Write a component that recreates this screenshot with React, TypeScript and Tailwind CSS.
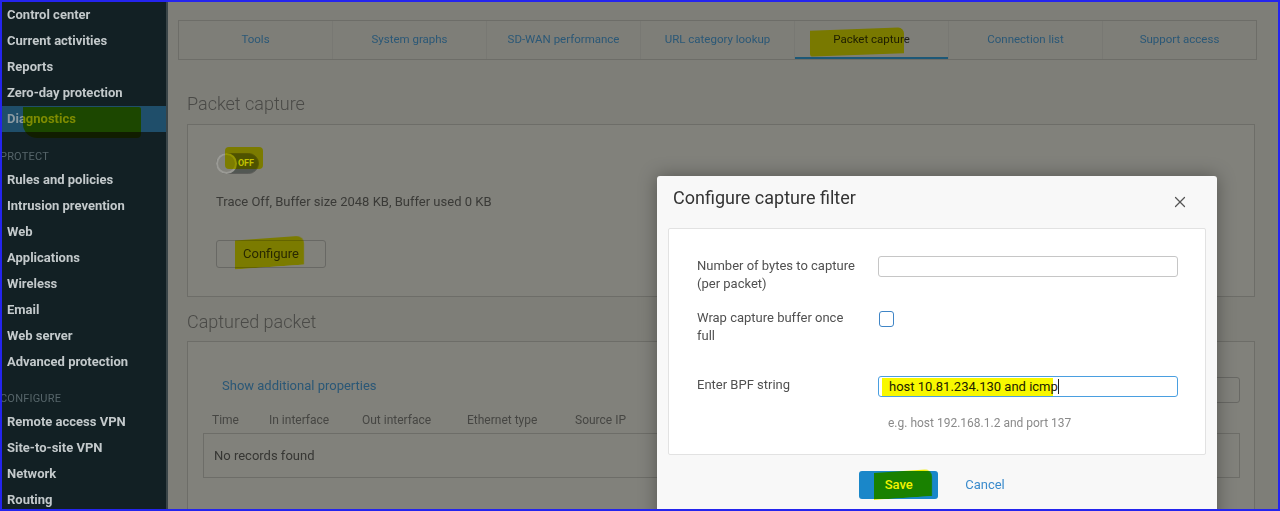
import React from "react";
import { X } from "lucide-react";

const font = { fontFamily: 'Roboto, "Liberation Sans", Arial, sans-serif' };

type NavItem = { label: string; header?: boolean; active?: boolean; h?: string };

const nav: NavItem[] = [
  { label: "Control center" },
  { label: "Current activities" },
  { label: "Reports" },
  { label: "Zero-day protection" },
  { label: "Diagnostics", active: true },
  { label: "PROTECT", header: true, h: "h-[35px]" },
  { label: "Rules and policies" },
  { label: "Intrusion prevention" },
  { label: "Web" },
  { label: "Applications" },
  { label: "Wireless" },
  { label: "Email" },
  { label: "Web server" },
  { label: "Advanced protection" },
  { label: "CONFIGURE", header: true, h: "h-[34px]" },
  { label: "Remote access VPN" },
  { label: "Site-to-site VPN" },
  { label: "Network" },
  { label: "Routing" },
];

const tabs = [
  "Tools",
  "System graphs",
  "SD-WAN performance",
  "URL category lookup",
  "Packet capture",
  "Connection list",
  "Support access",
];

function Sidebar() {
  return (
    <div className="w-[166px] shrink-0 bg-[#122024] border-r-2 border-[#3a4548] flex flex-col overflow-hidden">
      {nav.map((n) =>
        n.header ? (
          <div
            key={n.label}
            className={
              n.h +
              " shrink-0 flex items-end pb-[3px] -ml-[2px] text-[11px] leading-[14px] text-[#56656a] tracking-[0.2px]"
            }
          >
            {n.label}
          </div>
        ) : (
          <div
            key={n.label}
            className={
              "relative h-[26px] shrink-0 flex items-center pl-[5px] text-[13px] font-bold " +
              (n.active ? "bg-[#1f4e6a] text-[#8c9ba3]" : "text-[#c3c9cb]")
            }
          >
            {n.label}
            {n.active && (
              <span className="absolute left-[21px] top-[1px] w-[118px] h-[31px] bg-[#e6e600] mix-blend-multiply rounded-bl-[14px] rounded-br-[4px] rounded-tr-[2px]" />
            )}
          </div>
        )
      )}
    </div>
  );
}

function Tabs() {
  return (
    <div className="h-[40px] border border-[#6d6d68] flex">
      {tabs.map((t, i) => (
        <div
          key={t}
          className={
            "relative flex-1 flex items-center justify-center text-[11.5px] " +
            (i > 0 ? "border-l border-[#787873] " : "") +
            (t === "Packet capture" ? "text-[#1e1e14]" : "text-[#2b5877]")
          }
        >
          {t}
          {t === "Packet capture" && (
            <>
              <span className="absolute left-[15px] top-[8px] w-[94px] h-[26px] bg-[#f4f400] mix-blend-multiply rounded-tr-[6px] rounded-bl-[3px] skew-y-[-2deg]" />
              <span className="absolute left-0 right-0 bottom-0 h-[2px] bg-[#1d5877]" />
            </>
          )}
        </div>
      ))}
    </div>
  );
}

function Toggle() {
  return (
    <div className="relative w-[43px] h-[21px]">
      <div className="absolute inset-0 rounded-full bg-[#525753] border border-[#5d5d5a]" />
      <div className="absolute left-0 top-0 w-[21px] h-[21px] rounded-full bg-[#83837d] border-2 border-[#9a9a95]" />
      <span className="absolute right-[5px] top-[4px] text-[9px] font-bold leading-[12px] text-[#c9c9c0]">
        OFF
      </span>
      <span className="absolute left-[9px] -top-[6px] w-[38px] h-[22px] bg-[#f4f400] mix-blend-multiply rounded-sm" />
    </div>
  );
}

function Main() {
  return (
    <div className="relative flex-1 bg-[#7e7e78] pt-[18px] pl-[10px] pr-[21px] overflow-hidden">
      <Tabs />
      <div className="ml-[9px] mr-[2px]">
        <div className="mt-[32px] h-[24px] text-[18px] font-light leading-[24px] text-[#4a4a47]">
          Packet capture
        </div>
        <div className="mt-[8px] border border-[#6d6d68] bg-[#81817b] pl-[28px] pt-[28px] pb-[28px]">
          <Toggle />
          <div className="mt-[19px] text-[13px] leading-[18px] text-[#3a3a37]">
            Trace Off, Buffer size 2048 KB, Buffer used 0 KB
          </div>
          <div className="mt-[29px] relative w-[110px] h-[28px] border border-[#686864] rounded-[3px] flex items-center justify-center text-[13px] text-[#2a2a20]">
            Configure
            <span className="absolute left-[18px] top-[-3px] w-[69px] h-[29px] bg-[#f4f400] mix-blend-multiply rounded-tr-[8px] skew-y-[-4deg]" />
          </div>
        </div>

        <div className="mt-[13px] h-[24px] text-[18px] font-light leading-[24px] text-[#4a4a47]">
          Captured packet
        </div>
        <div className="mt-[7px] border border-[#6d6d68] bg-[#81817b] pt-[35px] pl-[15px] pr-[14px] h-[200px]">
          <div className="flex justify-between items-start">
            <div className="pl-[19px] text-[13px] leading-[18px] text-[#2a5776]">
              Show additional properties
            </div>
            <div className="w-[240px] h-[26px] border border-[#686864] rounded-[3px]" />
          </div>
          <div className="mt-[9px] flex h-[16px] items-center pl-[9px] text-[12px] text-[#464643]">
            <span className="w-[57px]">Time</span>
            <span className="w-[93px]">In interface</span>
            <span className="w-[105px]">Out interface</span>
            <span className="w-[108px]">Ethernet type</span>
            <span>Source IP</span>
          </div>
          <div className="mt-[5px] h-[45px] border border-[#6d6d68] flex items-center pl-[10px] text-[13px] text-[#363633]">
            No records found
          </div>
        </div>
      </div>
    </div>
  );
}

function Modal() {
  return (
    <div className="absolute left-[655px] top-[174px] w-[560px] h-[360px] bg-[#f8f8f8] rounded-t-[3px] shadow-[0_0_18px_rgba(0,0,0,0.35)] px-[11px] pt-[10px]">
      <div className="flex items-center justify-between pl-[5px] h-[24px]">
        <span className="text-[18px] leading-[24px] text-[#343434]">Configure capture filter</span>
        <X size={18} strokeWidth={1.6} className="text-[#555] mr-[17px] mt-[8px]" />
      </div>
      <div className="mt-[18px] bg-white border border-[#e2e2e2] rounded-[2px] h-[227px] pl-[28px] pt-[27px]">
        <div className="flex items-start">
          <div className="w-[181px] text-[13px] leading-[18px] text-[#505050] pt-px">
            Number of bytes to capture
            <br />
            (per packet)
          </div>
          <div className="w-[300px] h-[21px] border border-[#c6c6c6] rounded-[3px] bg-white" />
        </div>
        <div className="mt-[16px] flex items-start">
          <div className="w-[181px] text-[13px] leading-[18px] text-[#505050]">
            Wrap capture buffer once
            <br />
            full
          </div>
          <div className="mt-[2px] ml-[1px] w-[15px] h-[16px] border-[1.5px] border-[#3f85c6] rounded-[3px] bg-white" />
        </div>
        <div className="mt-[31px] flex items-start">
          <div className="w-[181px] text-[13px] leading-[18px] text-[#505050]">Enter BPF string</div>
          <div>
            <div className="relative w-[300px] h-[21px] border border-[#4a9fe0] rounded-[3px] bg-white flex items-center pl-[10px] text-[13px] text-[#222]">
              <span>host 10.81.234.130 and icmp</span>
              <span className="w-px h-[15px] bg-[#222]" />
              <span className="absolute left-[3px] top-[1px] w-[171px] h-[18px] bg-[#f8f800] mix-blend-multiply" />
            </div>
            <div className="mt-[17px] pl-[10px] text-[12px] leading-[18px] text-[#8a8a8a]">
              e.g. host 192.168.1.2 and port 137
            </div>
          </div>
        </div>
      </div>
      <div className="mt-[16px] flex justify-center items-center gap-[27px] pr-[10px]">
        <div className="relative w-[79px] h-[28px] bg-[#1a87c9] rounded-[3px] flex items-center justify-center text-[13px] text-white font-medium">
          Save
          <span className="absolute left-[15px] top-[0px] w-[58px] h-[27px] bg-[#f4f400] mix-blend-multiply rounded-tr-[8px] skew-y-[-4deg]" />
        </div>
        <span className="text-[13px] text-[#3a8bcc]">Cancel</span>
      </div>
    </div>
  );
}

export default function App() {
  return (
    <div style={font} className="relative w-[1280px] h-[511px] overflow-hidden border-2 border-[#2424ee] flex">
      <Sidebar />
      <Main />
      <Modal />
    </div>
  );
}
